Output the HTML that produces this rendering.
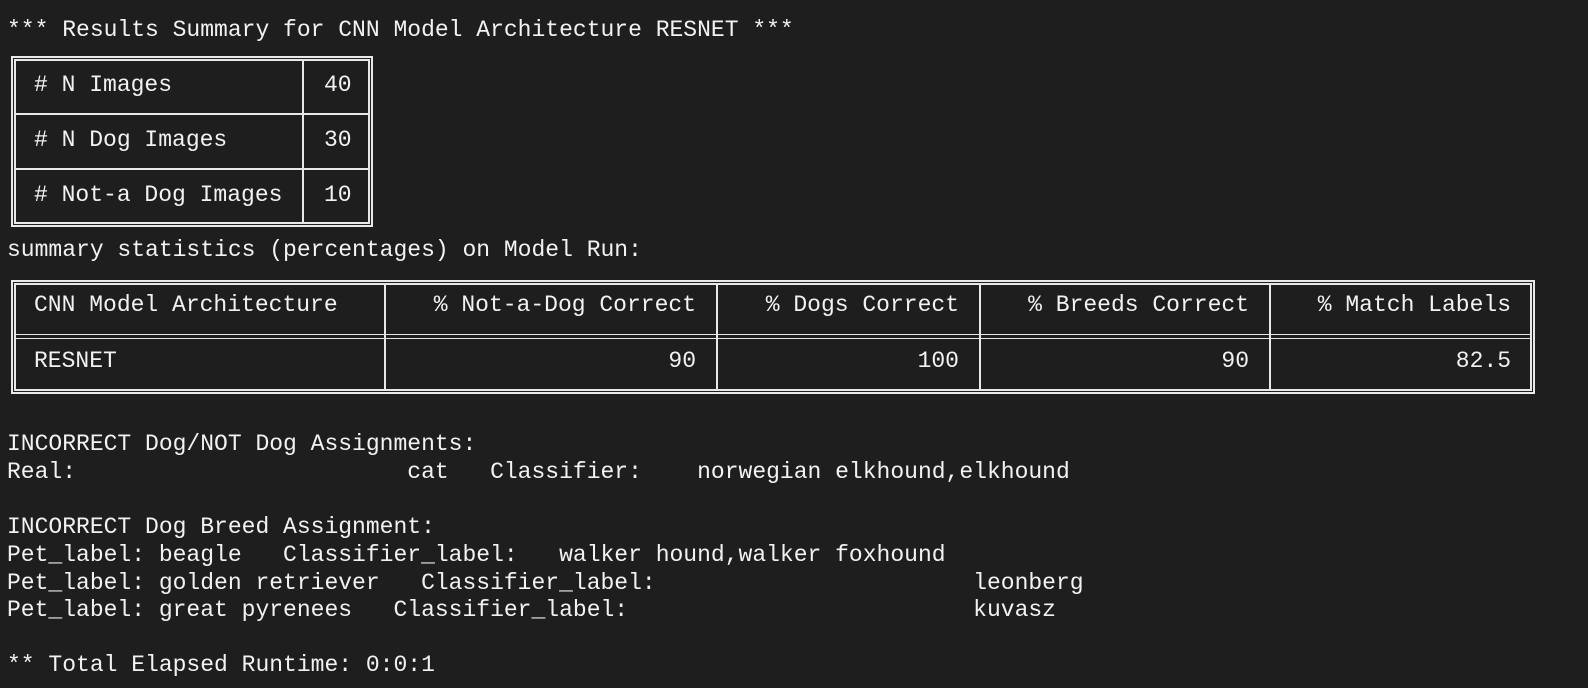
<!DOCTYPE html>
<html><head><style>
html,body{margin:0;padding:0;background:#1e1e1e;width:1588px;height:688px;overflow:hidden}
body{position:relative;font-family:"Liberation Mono",monospace;font-size:23px;color:#f2f2f2}
.l{position:absolute;left:7px;white-space:pre;line-height:28px;height:28px}
.r{position:absolute;white-space:pre;line-height:28px;text-align:right}
.box{position:absolute;border:5px double #e8e8e8;box-sizing:border-box}
.h{position:absolute;height:2px;background:#e8e8e8}
.hd{position:absolute;height:5px;border-top:1.5px solid #e8e8e8;border-bottom:1.5px solid #e8e8e8;box-sizing:border-box}
.v{position:absolute;width:2px;background:#e8e8e8}
</style></head><body>
<div class="l" style="top:16px">*** Results Summary for CNN Model Architecture RESNET ***</div>

<div class="box" style="left:11px;top:56px;width:362px;height:171px"></div>
<div class="h" style="left:14px;top:113px;width:356px"></div>
<div class="h" style="left:14px;top:168px;width:356px"></div>
<div class="v" style="left:302px;top:59px;height:165px"></div>
<div class="l" style="top:71px;left:34px"># N Images</div>
<div class="l" style="top:71px;left:324px">40</div>
<div class="l" style="top:126px;left:34px"># N Dog Images</div>
<div class="l" style="top:126px;left:324px">30</div>
<div class="l" style="top:181px;left:34px"># Not-a Dog Images</div>
<div class="l" style="top:181px;left:324px">10</div>

<div class="l" style="top:236px">summary statistics (percentages) on Model Run:</div>

<div class="box" style="left:11px;top:280px;width:1524px;height:114px"></div>
<div class="hd" style="left:14px;top:334px;width:1518px"></div>
<div class="v" style="left:384px;top:283px;height:108px"></div>
<div class="v" style="left:716px;top:283px;height:108px"></div>
<div class="v" style="left:979px;top:283px;height:108px"></div>
<div class="v" style="left:1269px;top:283px;height:108px"></div>
<div class="l" style="top:291px;left:34px">CNN Model Architecture</div>
<div class="r" style="top:291px;right:892px">% Not-a-Dog Correct</div>
<div class="r" style="top:291px;right:629px">% Dogs Correct</div>
<div class="r" style="top:291px;right:339px">% Breeds Correct</div>
<div class="r" style="top:291px;right:77px">% Match Labels</div>
<div class="l" style="top:347px;left:34px">RESNET</div>
<div class="r" style="top:347px;right:892px">90</div>
<div class="r" style="top:347px;right:629px">100</div>
<div class="r" style="top:347px;right:339px">90</div>
<div class="r" style="top:347px;right:77px">82.5</div>

<div class="l" style="top:430px">INCORRECT Dog/NOT Dog Assignments:</div>
<div class="l" style="top:458px">Real:                        cat   Classifier:    norwegian elkhound,elkhound</div>
<div class="l" style="top:513px">INCORRECT Dog Breed Assignment:</div>
<div class="l" style="top:541px">Pet_label: beagle   Classifier_label:   walker hound,walker foxhound</div>
<div class="l" style="top:569px">Pet_label: golden retriever   Classifier_label:                       leonberg</div>
<div class="l" style="top:596px">Pet_label: great pyrenees   Classifier_label:                         kuvasz</div>
<div class="l" style="top:651px">** Total Elapsed Runtime: 0:0:1</div>
</body></html>
